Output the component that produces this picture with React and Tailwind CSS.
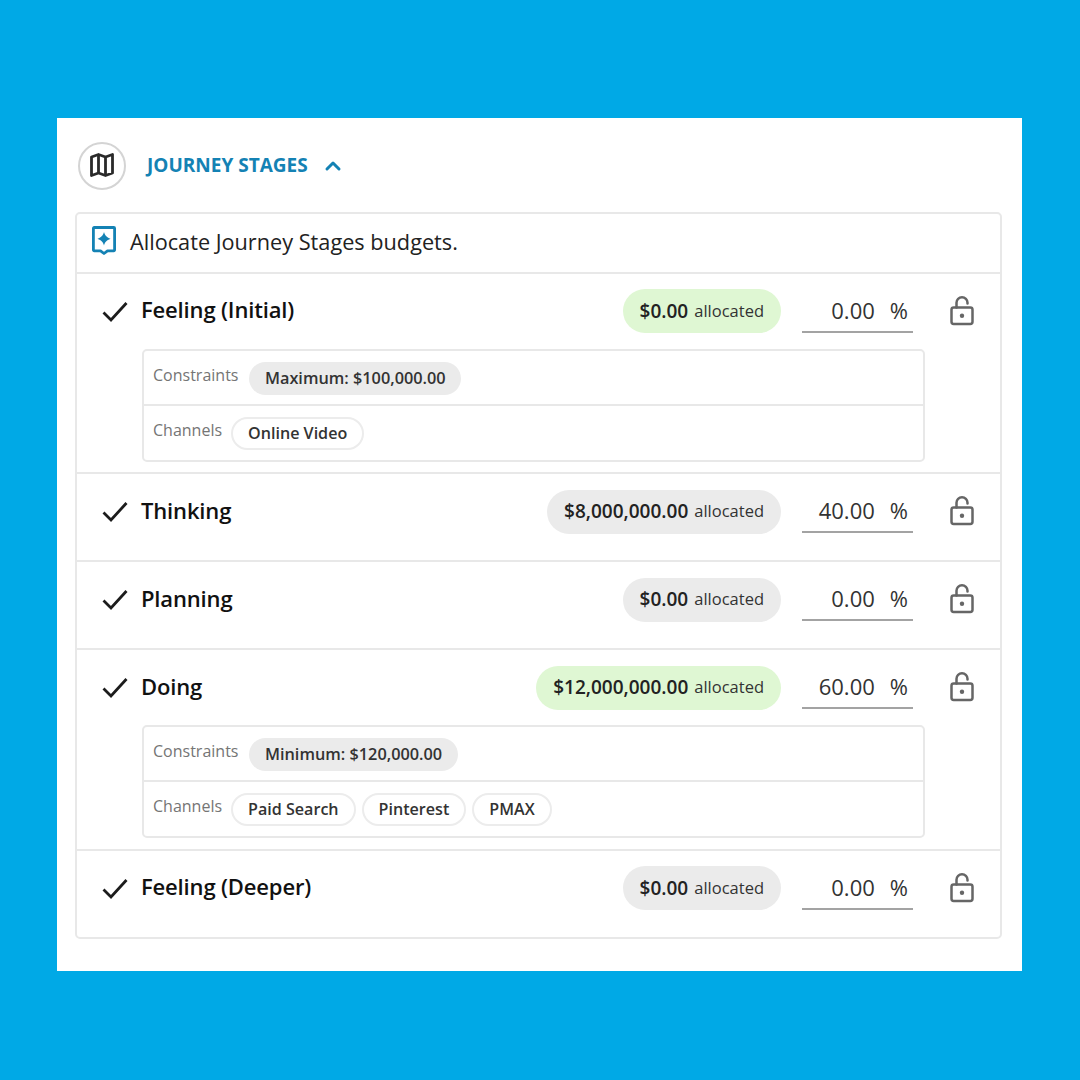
import React from "react";
import { ChevronUp } from "lucide-react";

const stages = [
  { name: "Feeling (Initial)", amount: "$0.00", pct: "0.00", green: true, constraint: "Maximum: $100,000.00", channels: ["Online Video"] },
  { name: "Thinking", amount: "$8,000,000.00", pct: "40.00" },
  { name: "Planning", amount: "$0.00", pct: "0.00" },
  { name: "Doing", amount: "$12,000,000.00", pct: "60.00", green: true, constraint: "Minimum: $120,000.00", channels: ["Paid Search", "Pinterest", "PMAX"] },
  { name: "Feeling (Deeper)", amount: "$0.00", pct: "0.00" },
];

function LockIcon() {
  return (
    <svg width="24" height="30" viewBox="0 0 24 30" fill="none" stroke="#666666" strokeWidth="2.500">
      <rect x="1.500" y="11.500" width="21" height="16.500" rx="2.200" />
      <path d="M6.500 11.500V6.800a5.500 5.500 0 0 1 11 0v.8" strokeLinecap="round" />
      <circle cx="12" cy="19.800" r="2.200" fill="#666666" stroke="none" />
    </svg>
  );
}

function TipIcon() {
  return (
    <svg width="24" height="29" viewBox="0 0 24 29" fill="none" className="mb-[4px]">
      <path d="M2.200 1.500h19.600a.8.8 0 0 1 .8.8v21.700a.8.8 0 0 1-.8.8H15.500L12 27.500l-3.500-2.700H2.200a.8.8 0 0 1-.8-.8V2.300a.8.8 0 0 1 .8-.8z" stroke="#1482b4" strokeWidth="2.800" strokeLinejoin="round" />
      <path d="M12 6c1 3.600 2.400 5 6.500 6.800C14.400 14.600 13 16 12 19.600c-1-3.600-2.400-5-6.500-6.800C9.600 11 11 9.600 12 6z" fill="#1482b4" />
    </svg>
  );
}

function MapIcon() {
  return (
    <svg width="24" height="24" viewBox="0 0 24 24" fill="none" stroke="#2a2a2a" strokeWidth="2.800" strokeLinejoin="round" className="mb-[2px]">
      <path d="M1.500 4 8.500 1.500l7 2.500 7-2.500v18.500l-7 2.500-7-2.500-7 2.500z" />
      <path d="M8.500 1.500V20M15.500 4v18.500" />
    </svg>
  );
}

function CheckIcon() {
  return (
    <svg width="26" height="22" viewBox="0 0 26 22" fill="none" stroke="#1c1c1c" strokeWidth="2.800" className="shrink-0">
      <path d="M1.500 11.500 9 19 24.500 2" />
    </svg>
  );
}

function Stage({ stage }) {
  return (
    <div className={`border-t-2 border-[#e8e8e8] pt-[13px] ${stage.constraint ? "pb-[10.5px]" : "pb-[11px]"}`}>
      <div className="flex items-center h-[46px] mb-[16px] pr-[26px]">
        <div className="ml-[25px] w-[39px] shrink-0 mt-[4px]">
          <CheckIcon />
        </div>
        <div className="text-[22px] font-semibold text-[#111111] tracking-[-0.15px] flex-1">{stage.name}</div>
        <div className={`h-[44px] mt-[3px] rounded-full px-[17px] flex items-center gap-[6px] ${stage.green ? "bg-[#dff7d3]" : "bg-[#ebebeb]"}`}>
          <span className="text-[19px] font-semibold text-[#222222]">{stage.amount}</span>
          <span className="text-[16.500px] text-[#333333]">allocated</span>
        </div>
        <div className="ml-[21px] w-[111px] h-[42px] mt-[4px] pb-[1px] border-b-2 border-[#a3a3a3] flex items-center justify-end pr-[5px] text-[22px] text-[#333333]">
          <span>{stage.pct}</span>
          <span className="ml-[15px]">%</span>
        </div>
        <div className="ml-[37px] mt-[2px] flex items-center">
          <LockIcon />
        </div>
      </div>
      {stage.constraint && (
        <div className="ml-[65px] w-[783px] border-2 border-[#e8e8e8] rounded-[5px]">
          <div className="flex h-[55px] border-b-2 border-[#e8e8e8] pl-[9px] pt-[11px]">
            <span className="text-[16px] text-[#757575] leading-[26px] mr-[11px]">Constraints</span>
            <span className="h-[33px] rounded-full bg-[#ebebeb] px-[15.5px] flex items-center text-[16.300px] font-semibold text-[#333333]">{stage.constraint}</span>
          </div>
          <div className="flex h-[54px] pl-[9px] pt-[11px]">
            <span className="text-[16px] text-[#757575] leading-[26px] mr-[9px]">Channels</span>
            <div className="flex gap-[6px]">
              {stage.channels.map((c) => (
                <span key={c} className="h-[33px] rounded-full border-2 border-[#ececec] px-[15px] flex items-center text-[16.100px] font-semibold text-[#333333]">{c}</span>
              ))}
            </div>
          </div>
        </div>
      )}
    </div>
  );
}

export default function App() {
  return (
    <div className="min-h-[1080px] bg-[#00a9e6] pt-[118px] pl-[57px] font-['Open_Sans',sans-serif]">
      <div className="w-[965px] h-[853px] bg-white pt-[24px] pl-[18px]">
        <div className="flex items-center h-[48px] pl-[3px]">
          <div className="w-[48px] h-[48px] rounded-full border-2 border-[#d4d4d4] flex items-center justify-center">
            <MapIcon />
          </div>
          <span className="ml-[21px] text-[19px] font-bold text-[#1482b4] pb-[2px]">JOURNEY STAGES</span>
          <ChevronUp className="ml-[13px] w-[24px] h-[24px] text-[#1482b4]" strokeWidth={3} />
        </div>
        <div className="mt-[22px] w-[927px] border-2 border-[#e8e8e8] rounded-[5px]">
          <div className="flex items-center h-[57.500px] pl-[15px]">
            <TipIcon />
            <span className="ml-[14px] text-[21.700px] text-[#222222]">Allocate Journey Stages budgets.</span>
          </div>
          {stages.map((s) => (
            <Stage key={s.name} stage={s} />
          ))}
        </div>
      </div>
    </div>
  );
}
